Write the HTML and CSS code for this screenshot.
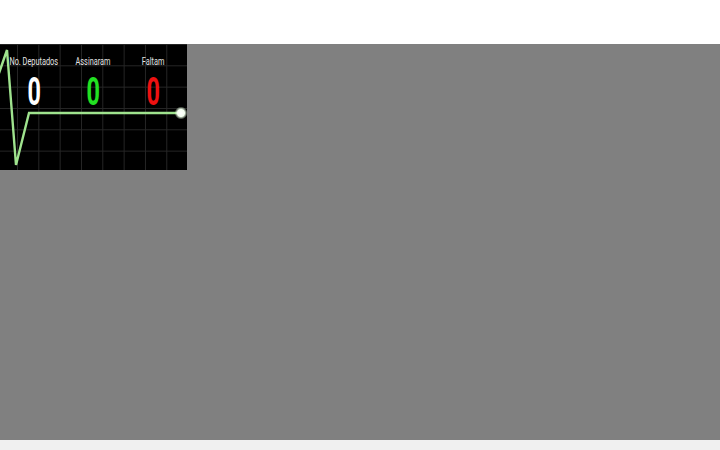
FILE: index.html
```html
<!DOCTYPE html>
<html lang="pt">
<head>
<meta charset="utf-8">
<title>Painel</title>
<link rel="stylesheet" href="styles.css">
</head>
<body>
<div class="page">
  <header class="top"></header>
  <main class="stage">
    <section class="panel">
      <svg class="ecg" width="187" height="126" viewBox="0 0 187 126" aria-hidden="true">
        <defs>
          <radialGradient id="glow" cx="50%" cy="50%" r="50%">
            <stop offset="0%" stop-color="#ffffff"/>
            <stop offset="55%" stop-color="#f4fff0"/>
            <stop offset="100%" stop-color="#d8f5d0" stop-opacity="0"/>
          </radialGradient>
        </defs>
        <polyline points="-2,32 7,6 16,121 29,69 181,69" fill="none" stroke="#9fe38e" stroke-width="2.4" stroke-linejoin="miter"/>
        <circle cx="181" cy="69" r="6.5" fill="url(#glow)"/>
      </svg>
      <div class="stats">
        <div class="stat">
          <span class="label">No. Deputados</span>
          <span class="num white">0</span>
        </div>
        <div class="stat">
          <span class="label">Assinaram</span>
          <span class="num green">0</span>
        </div>
        <div class="stat">
          <span class="label">Faltam</span>
          <span class="num red">0</span>
        </div>
      </div>
    </section>
  </main>
  <footer class="bottom"></footer>
</div>
</body>
</html>
```

FILE: styles.css
```css
html, body {
  margin: 0;
  padding: 0;
  height: 100%;
  overflow: hidden;
}
.page {
  display: flex;
  flex-direction: column;
  height: 450px;
  width: 720px;
}
.top {
  height: 44px;
  background: #ffffff;
  flex: none;
}
.stage {
  flex: 1;
  background: #808080;
  display: flex;
  align-items: flex-start;
}
.bottom {
  height: 10px;
  flex: none;
  background: #f0f0f0;
}
.panel {
  position: relative;
  width: 187px;
  height: 126px;
  background-color: #000;
  background-image:
    linear-gradient(to right, #262626 1px, transparent 1px),
    linear-gradient(to bottom, #262626 1px, transparent 1px);
  background-size: 21.33px 21.33px;
  background-position: 17px 0, 0 0;
  overflow: hidden;
}
.ecg {
  position: absolute;
  left: 0;
  top: 0;
}
.stats {
  position: relative;
  display: flex;
  padding: 12px 0 0 4px;
}
.stat {
  width: 59.5px;
  display: flex;
  flex-direction: column;
  align-items: center;
}
.label {
  display: inline-block;
  font-family: Roboto, "Liberation Sans", sans-serif;
  font-size: 10.5px;
  line-height: 12px;
  color: #e6e6e6;
  white-space: nowrap;
  transform: scaleX(0.7);
}
.num {
  display: inline-block;
  font-family: Roboto, "Liberation Sans", sans-serif;
  font-weight: 700;
  font-size: 39px;
  line-height: 40px;
  margin-top: 4px;
  transform: scaleX(0.6);
}
.white { color: #ffffff; }
.green { color: #22e022; }
.red { color: #ee1111; }
```
